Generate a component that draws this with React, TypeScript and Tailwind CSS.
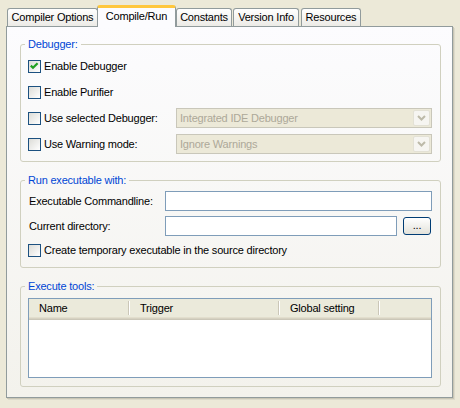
import React from 'react';

function Checkbox({ checked }: { checked?: boolean }) {
  return (
    <span className="flex h-[13px] w-[13px] shrink-0 items-center justify-center border border-[#1C5180] bg-gradient-to-br from-[#DCDCD7] to-white">
      {checked && (
        <svg width="11" height="11" viewBox="0 0 11 11">
          <path d="M1.8 4.6 L4 6.8 L8.6 2.2" fill="none" stroke="#21A121" strokeWidth="2.2" />
        </svg>
      )}
    </span>
  );
}

function Tab({ label, className }: { label: string; className: string }) {
  return (
    <div
      className={`flex h-[18px] items-center justify-center rounded-t-[3px] border border-b-0 border-[#919B9C] bg-gradient-to-b from-white to-[#ECEBE6] ${className}`}
    >
      {label}
    </div>
  );
}

function Group({ title, className, children }: { title: string; className: string; children: React.ReactNode }) {
  return (
    <fieldset className={`ml-[13px] w-[421px] rounded-[3px] border border-[#D0D0BF] pl-[7px] pr-[8px] ${className}`}>
      <legend className="-ml-[3px] px-[3px] leading-[13px] text-[#0046D5]">{title}</legend>
      {children}
    </fieldset>
  );
}

function Combo({ value }: { value: string }) {
  return (
    <div className="flex h-[20px] w-[256px] items-center border border-[#C9C7BA] bg-[#ECE9D8] p-px">
      <span className="flex-1 pl-[2px] text-[#ACA899]">{value}</span>
      <span className="flex h-full w-[17px] items-center justify-center rounded-[2px] border border-[#E3E1D5] bg-[#F6F5F1]">
        <svg width="9" height="6" viewBox="0 0 9 6">
          <path d="M1 1 L4.5 4.5 L8 1" fill="none" stroke="#BDBAA9" strokeWidth="2" />
        </svg>
      </span>
    </div>
  );
}

function CheckRow({ label, checked }: { label: string; checked?: boolean }) {
  return (
    <div className="flex h-[20px] items-center gap-[3px]">
      <Checkbox checked={checked} />
      <span>{label}</span>
    </div>
  );
}

const columns = [
  { label: 'Name', width: 'w-[101px]' },
  { label: 'Trigger', width: 'w-[150px]' },
  { label: 'Global setting', width: 'w-[100px]' },
];

export default function App() {
  return (
    <div className="h-[408px] w-[460px] bg-[#ECE9D8] pl-[6px] pt-[5px] font-['Liberation_Sans',Arial,sans-serif] text-[11px] tracking-[-0.2px] text-black">
      {/* Tab strip */}
      <div className="flex items-end pl-[1px]">
        <Tab label="Compiler Options" className="w-[91px]" />
        <div className="relative z-10 -mb-px -ml-px flex h-[22px] w-[79px] items-center justify-center rounded-t-[3px] border-x border-t-[3px] border-x-[#919B9C] border-t-[#FFC73C] bg-[#FCFCFE] pb-[2px]">
          Compile/Run
        </div>
        <Tab label="Constants" className="w-[56px]" />
        <Tab label="Version Info" className="ml-[1px] w-[66px]" />
        <Tab label="Resources" className="ml-[2px] w-[60px]" />
      </div>

      {/* Tab page */}
      <div className="w-[447px] border border-[#919B9C] bg-gradient-to-b from-[#FCFCFE] to-[#F3F2EC] pb-[10px] shadow-[1px_1px_0_#C9C6B5,2px_2px_0_#DDDACB]">
        <Group title="Debugger:" className="mt-[11px] pb-[7px]">
          <div className="flex flex-col gap-[6px] pt-[5px]">
            <CheckRow label="Enable Debugger" checked />
            <CheckRow label="Enable Purifier" />
            <div className="flex items-center">
              <div className="w-[148px]">
                <CheckRow label="Use selected Debugger:" />
              </div>
              <Combo value="Integrated IDE Debugger" />
            </div>
            <div className="flex items-center">
              <div className="w-[148px]">
                <CheckRow label="Use Warning mode:" />
              </div>
              <Combo value="Ignore Warnings" />
            </div>
          </div>
        </Group>

        <Group title="Run executable with:" className="mt-[12px] pb-[7px]">
          <div className="flex flex-col pt-[4px]">
            <div className="flex items-center">
              <span className="w-[137px] pl-px">Executable Commandline:</span>
              <div className="h-[20px] w-[267px] border border-[#7F9DB9] bg-white" />
            </div>
            <div className="mt-[5px] flex items-center">
              <span className="w-[137px] pl-px">Current directory:</span>
              <div className="h-[20px] w-[232px] border border-[#7F9DB9] bg-white" />
              <button className="ml-[6px] flex h-[18px] w-[28px] items-center justify-center rounded-[3px] border border-[#003C74] bg-gradient-to-b from-white to-[#E3E2DA] pb-[2px] leading-none">
                ...
              </button>
            </div>
            <div className="mt-[4px]">
              <CheckRow label="Create temporary executable in the source directory" />
            </div>
          </div>
        </Group>

        <Group title="Execute tools:" className="mt-[12px] pb-[8px]">
          <div className="mt-[5px] h-[80px] w-[404px] border border-[#7F9DB9] bg-white">
            <div className="flex h-[21px] bg-[#EBEADB] pb-[3px] shadow-[inset_0_-1px_0_#CBC7B8,inset_0_-2px_0_#D6D2C2,inset_0_-3px_0_#E2DECD]">
              {columns.map((col) => (
                <div key={col.label} className={`flex items-center ${col.width}`}>
                  <span className="flex-1 pl-[10px]">{col.label}</span>
                  <span className="h-[14px] w-[2px] border-l border-r border-l-[#CBC7B8] border-r-white" />
                </div>
              ))}
            </div>
          </div>
        </Group>
      </div>
    </div>
  );
}
